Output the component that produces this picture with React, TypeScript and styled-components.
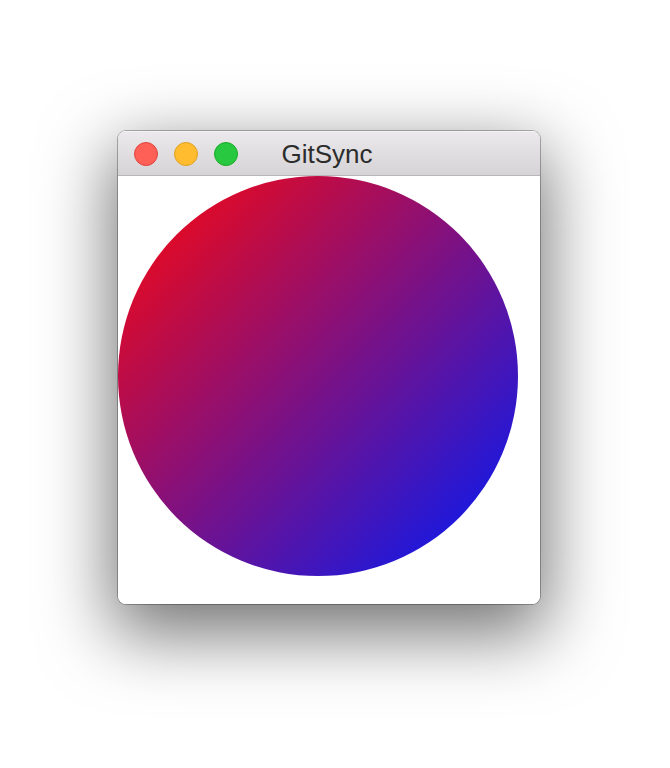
import { FC } from "react";
import styled, { createGlobalStyle } from "styled-components";

const lights = [
    { fill: "#fe5f57", edge: "#e0443e" },
    { fill: "#febc2e", edge: "#dea123" },
    { fill: "#28c840", edge: "#1aab29" },
];

const App: FC = () => {
    return (
        <Page>
            <Global />
            <Window>
                <TitleBar>
                    <Lights>
                        {lights.map((l) => (
                            <Light key={l.fill} $fill={l.fill} $edge={l.edge} />
                        ))}
                    </Lights>
                    <Title>GitSync</Title>
                </TitleBar>
                <Content>
                    <Circle />
                </Content>
            </Window>
        </Page>
    );
};

const Global = createGlobalStyle`
  html, body {
    margin: 0;
    background: #fff;
  }
`;

const Page = styled.div`
  width: 670px;
  height: 768px;
  padding: 131px 0 0 118px;
  box-sizing: border-box;
  font-family: "Liberation Sans", Arial, sans-serif;
`;

const Window = styled.div`
  width: 422px;
  height: 473px;
  border-radius: 8px;
  overflow: hidden;
  background: #fff;
  display: flex;
  flex-direction: column;
  box-shadow: 0 0 0 1px rgba(0, 0, 0, 0.28), 0 24px 70px 6px rgba(0, 0, 0, 0.55);
`;

const TitleBar = styled.div`
  position: relative;
  height: 44px;
  flex: none;
  display: flex;
  align-items: center;
  justify-content: center;
  background: linear-gradient(#ebe9eb, #d5d3d5);
  border-bottom: 1px solid #b8b6b8;
  box-shadow: inset 0 1px 0 #f4f3f4;
`;

const Lights = styled.div`
  position: absolute;
  left: 16px;
  top: 11px;
  display: flex;
  gap: 16px;
`;

const Light = styled.span<{ $fill: string; $edge: string }>`
  width: 24px;
  height: 24px;
  border-radius: 50%;
  box-sizing: border-box;
  background: ${(p) => p.$fill};
  border: 1px solid ${(p) => p.$edge};
`;

const Title = styled.div`
  font-size: 26px;
  color: #2c2c2c;
  margin-left: -4px;
  margin-top: 2px;
`;

const Content = styled.div`
  flex: 1;
  background: #fff;
`;

const Circle = styled.div`
  width: 400px;
  height: 400px;
  border-radius: 50%;
  background: linear-gradient(135deg, #da0a2c 15%, #2218d8 85%);
`;

export default App;
